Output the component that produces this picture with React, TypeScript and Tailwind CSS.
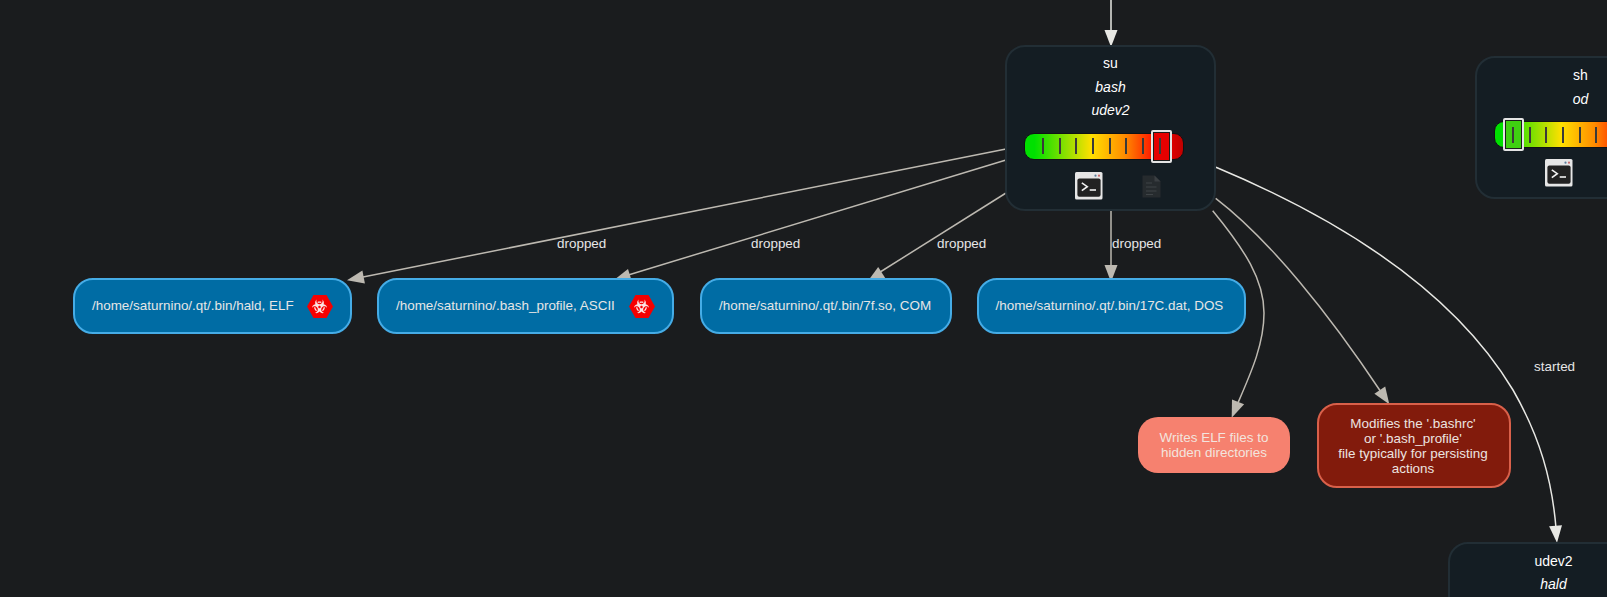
import { FaBiohazard } from "react-icons/fa"

const font = "font-['Liberation_Sans',Arial,sans-serif]"

// tip and tail of each arrow head, the head is drawn back along that line
function head(tx: number, ty: number, fx: number, fy: number) {
  const d = Math.hypot(tx - fx, ty - fy)
  const ux = (tx - fx) / d
  const uy = (ty - fy) / d
  const bx = tx - ux * 17
  const by = ty - uy * 17
  const p = (x: number, y: number) => `${x.toFixed(1)},${y.toFixed(1)}`
  return [p(tx, ty), p(bx - uy * 6.5, by + ux * 6.5), p(bx + uy * 6.5, by - ux * 6.5)].join(" ")
}

function Edges() {
  const gray = "#bdb9b1"
  const white = "#e8e8e4"
  return (
    <svg className="absolute inset-0" width="1607" height="597" fill="none">
      <path d="M1111 0V32" stroke={white} strokeWidth="1.5" />
      <polygon points={head(1111, 47, 1111, 0)} fill={white} />

      <path d="M1006 149L358 278" stroke={gray} strokeWidth="1.5" />
      <polygon points={head(347, 280.3, 1006, 149)} fill={gray} />
      <path d="M1006 160L625 276" stroke={gray} strokeWidth="1.5" />
      <polygon points={head(613.7, 280.3, 1006, 160)} fill={gray} />
      <path d="M1006 193L877 274" stroke={gray} strokeWidth="1.5" />
      <polygon points={head(867.4, 281.7, 1006, 193)} fill={gray} />
      <path d="M1111 211V266" stroke={gray} strokeWidth="1.5" />
      <polygon points={head(1111, 282, 1111, 211)} fill={gray} />

      <path d="M1212.7 210.7C1245 250 1264 280 1264 313C1264 345 1250 375 1237 405" stroke={gray} strokeWidth="1.5" />
      <polygon points={head(1231.7, 417.7, 1238, 402)} fill={gray} />
      <path d="M1215.7 198.3C1270 240 1330 315 1381 392" stroke={gray} strokeWidth="1.5" />
      <polygon points={head(1389.3, 404.3, 1379, 389)} fill={gray} />
      <path d="M1216 167.3C1330 215 1450 285 1513 390C1540 437 1552 480 1556 528" stroke={white} strokeWidth="1.5" />
      <polygon points={head(1557, 542.7, 1555.3, 523)} fill={white} />
    </svg>
  )
}

function TerminalIcon() {
  return (
    <svg width="28" height="28" viewBox="0 0 28 28" className="shrink-0">
      <rect x="0" y="0" width="27.5" height="27.5" rx="1.5" fill="#e6e6e6" />
      <circle cx="20.5" cy="3.7" r="1.1" fill="#5b7d9c" />
      <circle cx="24" cy="3.7" r="1.1" fill="#c96a6a" />
      <rect x="2.4" y="6.5" width="23.2" height="18.2" rx="2" fill="#222222" />
      <path d="M6.8 10.8L12.3 14.7L6.8 18.7" stroke="#f2f2f2" strokeWidth="1.6" fill="none" />
      <path d="M14.7 18H21" stroke="#f2f2f2" strokeWidth="1.6" />
    </svg>
  )
}

function FileIcon() {
  return (
    <svg width="19" height="23" viewBox="0 0 19 23" className="mt-[3px] shrink-0">
      <path d="M0.5 0.5H12.5L18.5 6.5V22.5H0.5Z" fill="#262b2e" />
      <path d="M12.5 0.5V6.5H18.5Z" fill="#3a3f42" />
      <path d="M4 8H10M4 12H14.5M4 16H14.5M4 19.5H11" stroke="#3f4447" strokeWidth="1" />
    </svg>
  )
}

function Bar({ selected }: { selected: number }) {
  return (
    <div className="relative ml-[16.5px] h-[27px] w-[160px] shrink-0 self-start rounded-[10px] border border-[#101214] bg-[linear-gradient(90deg,#00e000_6%,#ffe000_42%,#ff8c00_63%,#ff1000_82%,#e00000_92%,#c00000_100%)]">
      {selected === 0 ? (
        <div className="absolute left-[8px] top-[-4px] h-[33px] w-[21px] rounded-[2px] border-2 border-[#e4e4e4] bg-[#111]">
          <div className="h-full w-full border border-[#1c1c1c] bg-[#3fd011]" />
        </div>
      ) : (
        <div className="absolute left-[126px] top-[-4px] h-[33px] w-[21px] rounded-[2px] border-2 border-[#e4e4e4] bg-[#111]">
          <div className="h-full w-full border border-[#1c1c1c] bg-[#e60000]" />
        </div>
      )}
      <div className="relative flex h-full items-center gap-[14.7px] pl-[17.5px]">
        {[0, 1, 2, 3, 4, 5, 6, 7].map((i) => (
          <div key={i} className="h-[16px] w-[2px] bg-[#3a3a3a]" />
        ))}
      </div>
    </div>
  )
}

function FileNode({ label, hazard, className }: { label: string; hazard?: boolean; className: string }) {
  return (
    <div className={`absolute top-[278px] flex h-[56px] items-center justify-between rounded-[20px] border-2 border-[#45ace6] bg-[#006ca4] pl-[17px] pr-[17.5px] pt-[1px] text-[13.45px] text-[#e6e6e6] ${className}`}>
      <span className="whitespace-nowrap">{label}</span>
      {hazard && (
        <span className="relative flex h-[23px] w-[26px] items-center justify-center">
          <svg className="absolute inset-0" width="26" height="23" viewBox="0 0 26 23">
            <polygon points="0,11.5 6.5,0 19.5,0 26,11.5 19.5,23 6.5,23" fill="#f50000" />
          </svg>
          <FaBiohazard className="relative h-[15px] w-[15px] text-[#fbe4e4]" />
        </span>
      )}
    </div>
  )
}

function EdgeLabel({ text, className }: { text: string; className: string }) {
  return <span className={`absolute top-[236px] text-[13.45px] leading-[16px] text-[#e6e6e6] ${className}`}>{text}</span>
}

export default function App() {
  return (
    <div className={`relative h-[597px] w-[1607px] overflow-hidden bg-[#1a1c1e] ${font}`}>
      <Edges />

      {/* su */}
      <div className="absolute left-[1005px] top-[45px] flex h-[166px] w-[211px] flex-col items-center rounded-[20px] border-2 border-[#222e35] bg-[#141d23] pt-[5px] text-[14px] leading-[23.5px] text-white">
        <span>su</span>
        <span className="italic">bash</span>
        <span className="italic">udev2</span>
        <div className="mt-[10px] flex flex-col self-stretch">
          <Bar selected={7} />
          <div className="mt-[12px] flex gap-[39px] pl-[67.5px]">
            <TerminalIcon />
            <FileIcon />
          </div>
        </div>
      </div>

      {/* sh runs off the right side */}
      <div className="absolute left-[1475px] top-[56px] flex h-[143px] w-[211px] flex-col items-center rounded-[20px] border-2 border-[#222e35] bg-[#141d23] pt-[6px] text-[14px] leading-[23.5px] text-white">
        <span>sh</span>
        <span className="italic">od</span>
        <div className="mt-[10px] flex flex-col self-stretch">
          <Bar selected={0} />
          <div className="mt-[11px] flex pl-[67.5px]">
            <TerminalIcon />
          </div>
        </div>
      </div>

      {/* udev2 */}
      <div className="absolute left-[1448px] top-[542px] flex h-[166px] w-[211px] flex-col items-center rounded-[20px] border-2 border-[#222e35] bg-[#141d23] pt-[6px] text-[14px] leading-[22.5px] text-white">
        <span>udev2</span>
        <span className="italic">hald</span>
      </div>

      <FileNode label="/home/saturnino/.qt/.bin/hald, ELF" hazard className="left-[73px] w-[279px]" />
      <FileNode label="/home/saturnino/.bash_profile, ASCII" hazard className="left-[377px] w-[297px]" />
      <FileNode label="/home/saturnino/.qt/.bin/7f.so, COM" className="left-[700px] w-[252px]" />
      <FileNode label="/home/saturnino/.qt/.bin/17C.dat, DOS" className="left-[976.5px] w-[269px]" />

      <div className="absolute left-[1138px] top-[417px] flex h-[56px] w-[152px] items-center justify-center rounded-[20px] bg-[#f6816f] text-center text-[13.45px] leading-[15px] text-[#f3e4de]">
        Writes ELF files to
        <br />
        hidden directories
      </div>

      <div className="absolute left-[1317px] top-[403px] flex h-[85px] w-[194px] items-center justify-center rounded-[20px] border-2 border-[#d9604a] bg-[#821b0c] pr-[2px] text-center text-[13.45px] leading-[15px] text-[#ece4e0]">
        Modifies the '.bashrc'
        <br />
        or '.bash_profile'
        <br />
        file typically for persisting
        <br />
        actions
      </div>

      <EdgeLabel text="dropped" className="left-[557px]" />
      <EdgeLabel text="dropped" className="left-[751px]" />
      <EdgeLabel text="dropped" className="left-[937px]" />
      <EdgeLabel text="dropped" className="left-[1112px]" />
      <span className="absolute left-[1534px] top-[359px] text-[13.45px] leading-[16px] text-[#e6e6e6]">started</span>
    </div>
  )
}
